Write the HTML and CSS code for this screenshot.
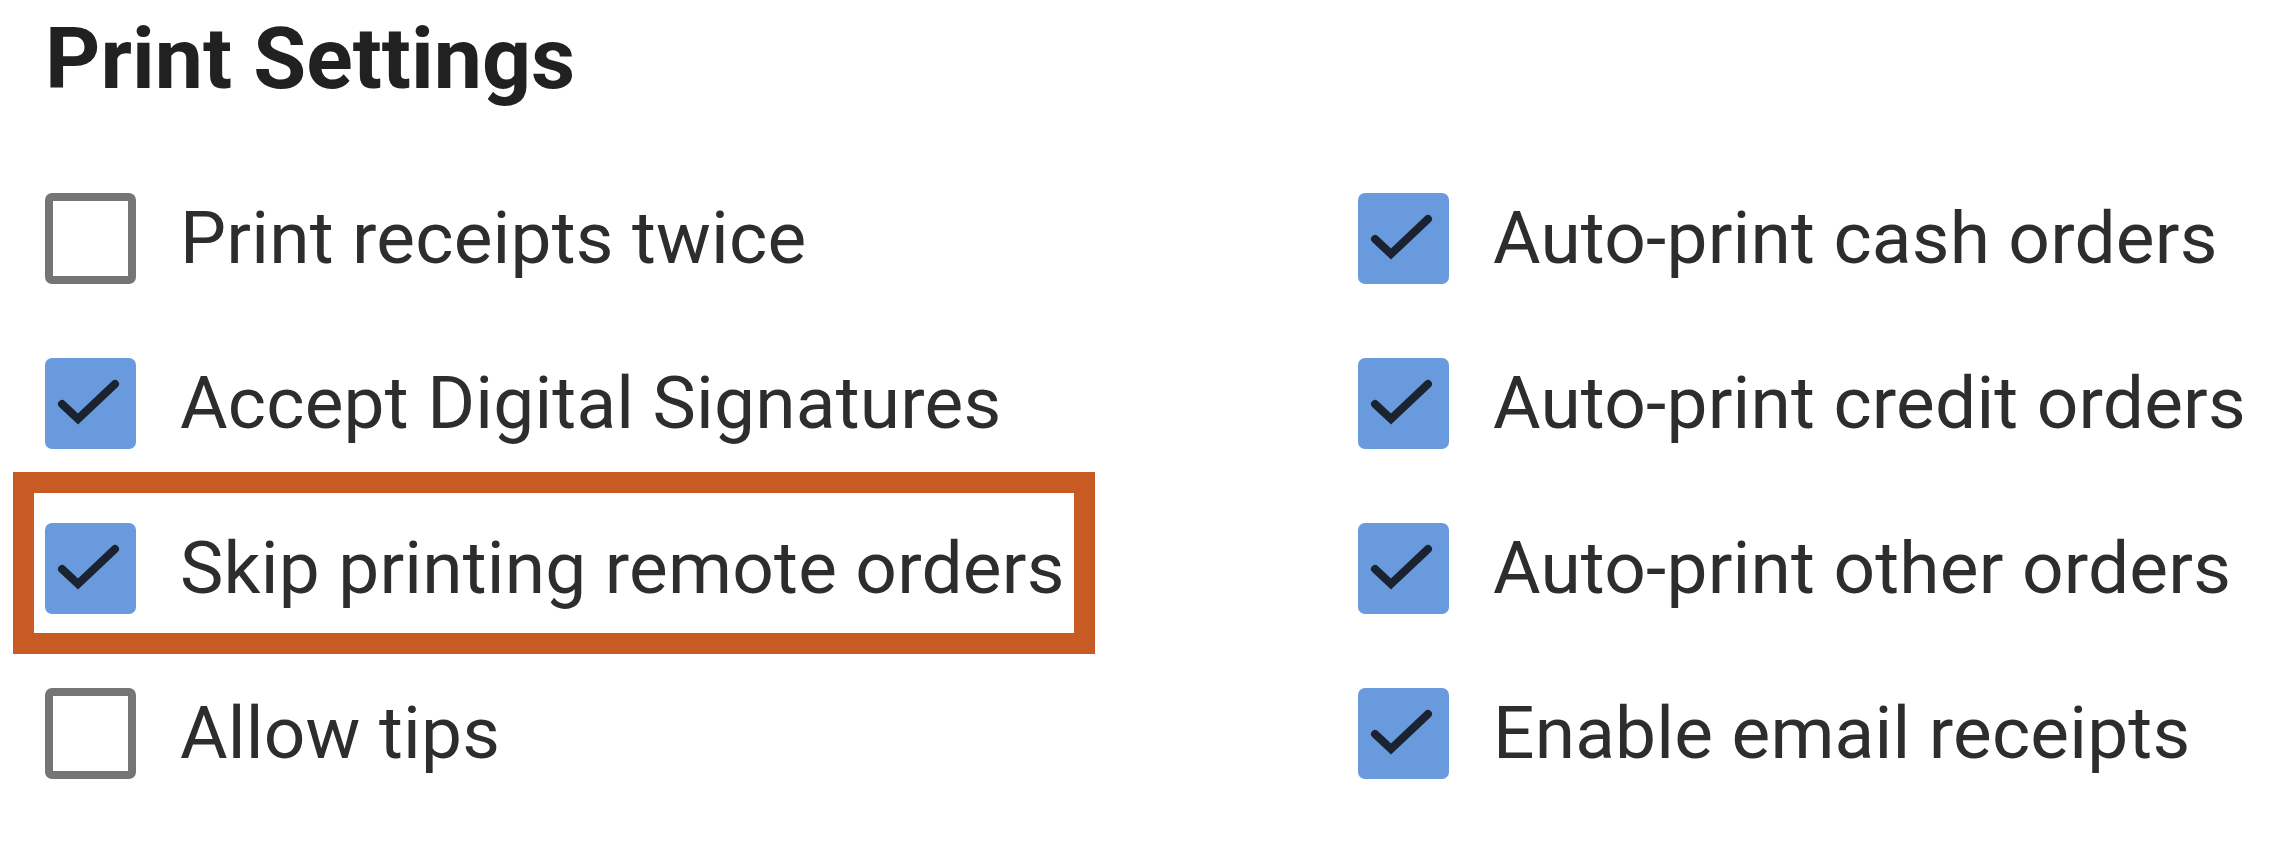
FILE: index.html
```html
<!DOCTYPE html>
<html lang="en">
<head>
  <meta charset="UTF-8">
  <title>Print Settings</title>
  <link rel="stylesheet" href="styles.css">
</head>
<body>
  <section class="settings">
    <h2>Print Settings</h2>

    <div class="options">
      <label class="option">
        <span class="box"></span>
        <span class="label">Print receipts twice</span>
      </label>
      <label class="option">
        <span class="box checked"><svg viewBox="0 0 91 91"><polyline points="17,46 33,61 70,26"/></svg></span>
        <span class="label">Auto-print cash orders</span>
      </label>

      <label class="option">
        <span class="box checked"><svg viewBox="0 0 91 91"><polyline points="17,46 33,61 70,26"/></svg></span>
        <span class="label">Accept Digital Signatures</span>
      </label>
      <label class="option">
        <span class="box checked"><svg viewBox="0 0 91 91"><polyline points="17,46 33,61 70,26"/></svg></span>
        <span class="label">Auto-print credit orders</span>
      </label>

      <label class="option highlight">
        <span class="box checked"><svg viewBox="0 0 91 91"><polyline points="17,46 33,61 70,26"/></svg></span>
        <span class="label">Skip printing remote orders</span>
      </label>
      <label class="option">
        <span class="box checked"><svg viewBox="0 0 91 91"><polyline points="17,46 33,61 70,26"/></svg></span>
        <span class="label">Auto-print other orders</span>
      </label>

      <label class="option">
        <span class="box"></span>
        <span class="label">Allow tips</span>
      </label>
      <label class="option">
        <span class="box checked"><svg viewBox="0 0 91 91"><polyline points="17,46 33,61 70,26"/></svg></span>
        <span class="label">Enable email receipts</span>
      </label>
    </div>
  </section>
</body>
</html>
```

FILE: styles.css
```css
body { margin: 0; padding: 0; background-color: #fff; font-family: Roboto, "Liberation Sans", Arial, sans-serif; }

.settings { padding: 16px 0 0 45px; }

.settings h2 {
  margin: 0;
  font-size: 86px;
  line-height: 86px;
  font-weight: 700;
  color: #212121;
}

.options {
  margin-top: 91px;
  display: grid;
  grid-template-columns: 1313px auto;
  grid-auto-rows: 91px;
  row-gap: 74px;
}

.option {
  display: flex;
  align-items: center;
  gap: 44px;
  justify-self: start;
}

.box {
  width: 91px;
  height: 91px;
  box-sizing: border-box;
  border: 8px solid #757575;
  border-radius: 7px;
  background-color: #fff;
  flex-shrink: 0;
}
.box.checked {
  border: none;
  background-color: #6a9ade;
}
.box svg {
  display: block;
  width: 91px;
  height: 91px;
}
.box polyline {
  fill: none;
  stroke: #1b2331;
  stroke-width: 8;
  stroke-linecap: round;
  stroke-linejoin: miter;
}

.label {
  font-size: 73px;
  line-height: 73px;
  letter-spacing: 0.2px;
  color: #2d2d2d;
  white-space: nowrap;
}

/* orange annotation frame around one row */
.highlight { position: relative; }
.highlight::after {
  content: "";
  position: absolute;
  left: -32px;
  top: -51px;
  right: -30px;
  bottom: -40px;
  border: 21px solid #c85a24;
  pointer-events: none;
}
```
